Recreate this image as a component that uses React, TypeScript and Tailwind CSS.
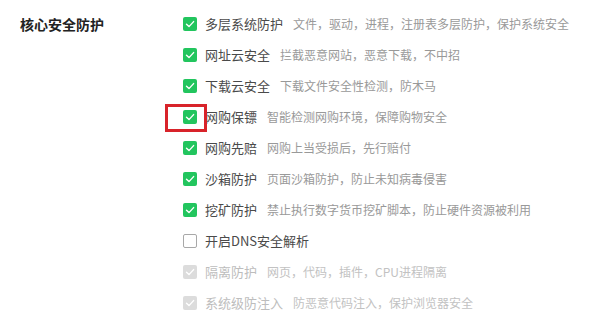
import React from 'react';

type Item = {
  label: string;
  desc?: string;
  state: 'on' | 'off' | 'disabled';
  highlight?: boolean;
};

const items: Item[] = [
  { label: '多层系统防护', desc: '文件，驱动，进程，注册表多层防护，保护系统安全', state: 'on' },
  { label: '网址云安全', desc: '拦截恶意网站，恶意下载，不中招', state: 'on' },
  { label: '下载云安全', desc: '下载文件安全性检测，防木马', state: 'on' },
  { label: '网购保镖', desc: '智能检测网购环境，保障购物安全', state: 'on', highlight: true },
  { label: '网购先赔', desc: '网购上当受损后，先行赔付', state: 'on' },
  { label: '沙箱防护', desc: '页面沙箱防护，防止未知病毒侵害', state: 'on' },
  { label: '挖矿防护', desc: '禁止执行数字货币挖矿脚本，防止硬件资源被利用', state: 'on' },
  { label: '开启DNS安全解析', state: 'off' },
  { label: '隔离防护', desc: '网页，代码，插件，CPU进程隔离', state: 'disabled' },
  { label: '系统级防注入', desc: '防恶意代码注入，保护浏览器安全', state: 'disabled' },
];

const Check: React.FC = () => (
  <svg viewBox="0 0 14 14" className="h-[14px] w-[14px]">
    <path d="M3.5 7.2 L6 9.6 L10.6 4.6" fill="none" stroke="#fff" strokeWidth="1.4" strokeLinecap="round" strokeLinejoin="round" />
  </svg>
);

const Box: React.FC<{ state: Item['state'] }> = ({ state }) => {
  if (state === 'off') {
    return <span className="block h-[14px] w-[14px] rounded-[2px] border border-[#a8a8a8] bg-white" />;
  }
  return (
    <span
      className={`flex h-[14px] w-[14px] items-center justify-center rounded-[2px] ${
        state === 'on' ? 'bg-[#22c55e]' : 'bg-[#dcdcdc]'
      }`}
    >
      <Check />
    </span>
  );
};

export default function App() {
  return (
    <div
      className="flex h-[325px] w-[604px] bg-white pl-[20px] pt-[8.5px]"
      style={{ fontFamily: '"Microsoft YaHei", "Noto Sans CJK SC", sans-serif' }}
    >
      <div className="flex h-[31px] w-[163px] shrink-0 items-center text-[14px] font-bold text-[#222]">
        核心安全防护
      </div>
      <ul className="flex flex-col">
        {items.map((item) => {
          const disabled = item.state === 'disabled';
          return (
            <li key={item.label} className="flex h-[31px] items-center">
              <span className="relative">
                <Box state={item.state} />
                {item.highlight && (
                  <span className="absolute left-[-18px] top-[-6px] h-[28px] w-[42px] border-[3px] border-[#d8232a]" />
                )}
              </span>
              <span className={`ml-[8px] text-[13px] ${disabled ? 'text-[#bdbdbd]' : 'text-[#4a4a4a]'}`}>
                {item.label}
              </span>
              {item.desc && (
                <span className={`ml-[10px] text-[12px] ${disabled ? 'text-[#c2c2c2]' : 'text-[#999]'}`}>
                  {item.desc}
                </span>
              )}
            </li>
          );
        })}
      </ul>
    </div>
  );
}
